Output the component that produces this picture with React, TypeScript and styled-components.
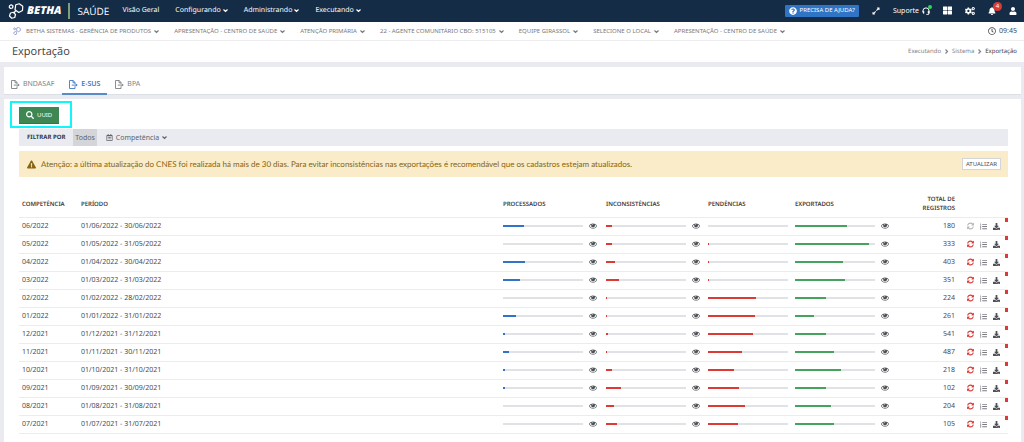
import React from "react";
import styled, { createGlobalStyle } from "styled-components";
import {
  FaBell,
  FaCogs,
  FaDownload,
  FaExclamationTriangle,
  FaExpandAlt,
  FaListOl,
  FaQuestionCircle,
  FaRegCalendarAlt,
  FaRegClock,
  FaSearch,
  FaThLarge,
  FaUser,
} from "react-icons/fa";

const GlobalStyle = createGlobalStyle`
  *, *::before, *::after { box-sizing: border-box; }
  html { background: #e9ebf0; }
  body {
    margin: 0;
    font-family: "Noto Sans", "Open Sans", sans-serif;
    font-size: 7px;
    line-height: 11px;
    color: #4a4d52;
    text-rendering: geometricPrecision;
  }
  button { font: inherit; color: inherit; background: none; border: 0; padding: 0; margin: 0; cursor: pointer; }
  a { color: inherit; text-decoration: none; }
  svg { display: block; flex: none; }
`;

/* ---------- drawings ---------- */

const Molecule = ({ size }: { size: number }) => (
  <svg width={size} height={size} viewBox="0 0 32 32" fill="none" stroke="currentColor" strokeWidth="2.4" strokeLinejoin="round">
    <path d="M15.500 3.500 22.500 1.500 29.500 6.500 29 15 21.500 19 14 13.500Z" />
    <path d="M3 5.500 6.500 3.500 10 6 9 10 5 11 2.500 8.500Z" />
    <path d="M5 20 10.500 18.500 15 23 13.500 29 7.500 30.500 3 26Z" />
    <path d="M15.500 15.500 12 19.500" />
  </svg>
);

const Chevron = ({ size = 5 }: { size?: number }) => (
  <svg width={size} height={size} viewBox="0 0 10 10" fill="none" stroke="currentColor" strokeWidth="2.4">
    <path d="M1 3l4 4 4-4" />
  </svg>
);

const ChevronRight = () => (
  <svg width="5" height="5" viewBox="0 0 10 10" fill="none" stroke="currentColor" strokeWidth="2.400">
    <path d="M3 1l4 4-4 4" />
  </svg>
);

const ExportIcon = () => (
  <svg width="9" height="9" viewBox="0 0 18 18" fill="none" stroke="currentColor" strokeWidth="1.800">
    <path d="M12 12.500V17H1V1h7.500L12 5v3" />
    <path d="M8 1v4.500h4" />
    <path d="M5.500 10.200H14" />
    <path d="M13.500 7.200 17.500 10.200l-4 3z" fill="currentColor" stroke="none" />
  </svg>
);

const Headset = () => (
  <svg width="8" height="8" viewBox="0 0 18 18" fill="none" stroke="currentColor" strokeWidth="2.200">
    <path d="M2 11V9a7 7 0 0 1 14 0v5q0 3-3 3h-3" />
    <path d="M2 9.500h2.500v5H3.500Q2 14 2 12zM16 9.500h-2.500v5h1Q16 14 16 12z" fill="currentColor" strokeWidth="1" />
  </svg>
);

const EyeIcon = () => (
  <svg width="8" height="8" viewBox="0 64 1792 1792" fill="currentColor">
    <path d="M1664 960q-152-236-381-353 61 104 61 225 0 185-131.5 316.5t-316.5 131.5-316.5-131.5-131.5-316.5q0-121 61-225-229 117-381 353 133 205 333.5 326.5t434.5 121.5 434.5-121.5 333.5-326.5zm-720-384q0-20-14-34t-34-14q-125 0-214.5 89.5t-89.5 214.5q0 20 14 34t34 14 34-14 14-34q0-86 61-147t147-61q20 0 34-14t14-34zm848 384q0 34-20 69-140 230-376.5 368.5t-499.5 138.5-499.5-139-376.5-368q-20-35-20-69t20-69q140-229 376.5-368t499.5-139 499.5 139 376.5 368q20 35 20 69z" />
  </svg>
);

const RefreshIcon = () => (
  <svg width="7" height="8" viewBox="0 0 1536 1792" fill="currentColor">
    <path d="M1511 1056q0 5-1 7-64 268-268 434.5t-478 166.5q-146 0-282.5-55t-243.5-157l-129 129q-19 19-45 19t-45-19-19-45v-448q0-26 19-45t45-19h448q26 0 45 19t19 45-19 45l-137 137q71 66 161 102t187 36q134 0 250-65t186-179q11-17 53-117 8-23 30-23h192q13 0 22.5 9.5t9.5 22.5zm25-800v448q0 26-19 45t-45 19h-448q-26 0-45-19t-19-45 19-45l138-138q-148-137-349-137-134 0-250 65t-186 179q-11 17-53 117-8 23-30 23h-199q-13 0-22.5-9.5t-9.5-22.5v-7q65-268 270-434.5t480-166.5q146 0 284 55.5t245 156.5l130-129q19-19 45-19t45 19 19 45z" />
  </svg>
);

/* ---------- top bar ---------- */

const TopBar = styled.header`
  display: flex;
  align-items: center;
  height: 22px;
  padding: 0 7px 1px 8px;
  background: #152c47;
  color: #fff;
`;

const Brand = styled.a`
  display: flex;
  align-items: center;
  gap: 3px;
  font-family: "Open Sans", "Noto Sans", sans-serif;
  font-size: 11px;
  font-weight: 800;
  font-style: italic;
`;

const Product = styled.span`
  margin-left: 6px;
  padding-left: 8px;
  border-left: 2px solid #7f9f76;
  font-family: "Open Sans", "Noto Sans", sans-serif;
  font-size: 10px;
  line-height: 16px;
`;

const MainNav = styled.nav`
  display: flex;
  gap: 16px;
  margin-left: 13px;
`;

const NavItem = styled.a`
  display: flex;
  align-items: center;
  gap: 2px;
`;

const Tools = styled.div`
  display: flex;
  align-items: center;
  gap: 13px;
  margin-left: auto;
`;

const HelpButton = styled.button`
  display: flex;
  align-items: center;
  gap: 3px;
  height: 12px;
  padding: 0 4px;
  border-radius: 1px;
  background: #2f74c5;
  color: #fff;
  font-size: 6px;
`;

const ToolButton = styled.button`
  position: relative;
  display: flex;
  align-items: center;
  gap: 3px;
`;

const OnlineDot = styled.span`
  position: absolute;
  top: 0;
  right: -2px;
  width: 4px;
  height: 4px;
  border-radius: 50%;
  background: #2fd45c;
`;

const Badge = styled.span`
  position: absolute;
  top: -5px;
  right: -6px;
  width: 9px;
  height: 9px;
  border-radius: 50%;
  background: #dc3a35;
  font-size: 6px;
  line-height: 9px;
  text-align: center;
`;

/* ---------- context and title bars ---------- */

const ContextBar = styled.div`
  display: flex;
  align-items: center;
  gap: 15px;
  height: 19px;
  padding: 0 7px 0 13px;
  border-bottom: 1px solid #ededef;
  background: #fff;
  color: #77797d;
`;

const ContextItem = styled.button`
  display: flex;
  align-items: center;
  gap: 3px;
  font-size: 6px;
  white-space: nowrap;
`;

const ContextLogo = styled.span`
  margin-right: 2px;
  color: #6570bd;
`;

const Clock = styled.time`
  display: flex;
  align-items: center;
  gap: 3px;
  margin-left: auto;
  color: #45474b;
`;

const TitleBar = styled.div`
  display: flex;
  align-items: center;
  justify-content: space-between;
  height: 21px;
  padding: 0 7px 0 12px;
  background: #fff;
`;

const Title = styled.h1`
  margin: 0;
  font-family: "Open Sans", "Noto Sans", sans-serif;
  font-size: 11px;
  line-height: 15px;
  font-weight: 400;
  color: #3c3e42;
`;

const Breadcrumb = styled.nav`
  display: flex;
  align-items: center;
  gap: 3px;
  color: #808286;
  font-size: 6px;
`;

const Current = styled.span`
  color: #3c3e42;
`;

/* ---------- content ---------- */

const Page = styled.main`
  display: flex;
  flex-direction: column;
  gap: 4px;
  padding: 5px 3px 0 4px;
`;

const TabCard = styled.nav`
  display: flex;
  align-items: flex-end;
  gap: 1px;
  height: 28px;
  background: #fff;
  border-bottom: 1px solid #dcdfe4;
`;

const Tab = styled.a<{ $active?: boolean }>`
  display: flex;
  align-items: center;
  gap: 3px;
  height: 19px;
  padding: 0 7px;
  margin-bottom: -1px;
  border-bottom: 2px solid ${(p) => (p.$active ? "#5b8ac8" : "transparent")};
  color: ${(p) => (p.$active ? "#3f7ac4" : "#7d7f83")};
  font-weight: ${(p) => (p.$active ? 600 : 400)};
`;

const Card = styled.section`
  min-height: 343px;
  padding: 2px 13px 9px 6px;
  background: #fff;
`;

const Highlight = styled.div`
  width: fit-content;
  padding: 4px 11px 2px 7px;
  border: 2px solid #12f6fb;
`;

const PrimaryButton = styled.button`
  display: flex;
  align-items: center;
  gap: 3px;
  height: 17px;
  padding: 0 7px;
  border-bottom: 1px solid #357546;
  background: #3f8752;
  color: #fff;
  font-size: 6px;
`;

const Body = styled.div`
  padding-left: 9px;
`;

const FilterBar = styled.div`
  display: flex;
  align-items: center;
  height: 17px;
  margin-top: 1px;
  padding-left: 8px;
  background: #e9ebf0;
  color: #606368;
`;

const FilterTitle = styled.strong`
  margin-right: 8px;
  color: #34373b;
  font-size: 6px;
  font-weight: 700;
`;

const FilterOption = styled.button<{ $selected?: boolean }>`
  display: flex;
  align-items: center;
  gap: 3px;
  height: 17px;
  padding: 0 2px;
  margin-right: 7px;
  background: ${(p) => (p.$selected ? "#d4d5d9" : "transparent")};
`;

const Alert = styled.div`
  display: flex;
  align-items: center;
  gap: 5px;
  height: 26px;
  margin-top: 5px;
  padding: 0 7px 0 8px;
  background: #faecc9;
  color: #866410;
`;

const AlertText = styled.span`
  flex: 1;
  font-family: Lato, "Open Sans", sans-serif;
  font-size: 8px;
`;

const AlertButton = styled.button`
  height: 12px;
  padding: 0 3px;
  border: 1px solid #d3d5d9;
  background: #fff;
  color: #4a4d52;
  font-size: 6px;
  line-height: 10px;
`;

/* ---------- table ---------- */

const Table = styled.table`
  width: 100%;
  margin-top: 15px;
  border-collapse: collapse;
  table-layout: fixed;
`;

const Col = styled.col<{ $width?: number }>`
  width: ${(p) => (p.$width ? `${p.$width}px` : "auto")};
`;

const HeadCell = styled.th<{ $right?: boolean }>`
  height: 25px;
  padding: 0 3px;
  border-bottom: 1px solid #ececef;
  color: #3c3e42;
  font-size: 6px;
  font-weight: 600;
  line-height: 9px;
  text-align: ${(p) => (p.$right ? "right" : "left")};
`;

const Cell = styled.td<{ $right?: boolean }>`
  position: relative;
  height: 18px;
  padding: 0 3px;
  border-bottom: 1px solid #ececef;
  text-align: ${(p) => (p.$right ? "right" : "left")};
`;

const Meter = styled.div`
  display: flex;
  align-items: center;
  gap: 6px;
  height: 8px;
`;

const Track = styled.div`
  width: 80px;
  height: 2px;
  background: #e0e2e6;
`;

const Fill = styled.div<{ $color: string }>`
  height: 2px;
  background: ${(p) => p.$color};
`;

const Actions = styled.div`
  display: flex;
  align-items: center;
  gap: 6px;
  height: 8px;
  padding-left: 6px;
`;

const tones = { danger: "#dc3a35", muted: "#b4b6ba", soft: "#7a7c80", plain: "#4d5055" };

const ActionButton = styled.button<{ $tone?: keyof typeof tones }>`
  color: ${(p) => tones[p.$tone ?? "plain"]};
`;

const Marker = styled.span`
  position: absolute;
  top: 0;
  right: 0;
  width: 3px;
  height: 4px;
  background: #dc3a35;
`;

const contexts = [
  "BETHA SISTEMAS - GERÊNCIA DE PRODUTOS",
  "APRESENTAÇÃO - CENTRO DE SAÚDE",
  "ATENÇÃO PRIMÁRIA",
  "22 - AGENTE COMUNITÁRIO CBO: 515105",
  "EQUIPE GIRASSOL",
  "SELECIONE O LOCAL",
  "APRESENTAÇÃO - CENTRO DE SAÚDE",
];

type Row = [string, string, number, number, number, number, number];

const rows: Row[] = [
  ["06/2022", "01/06/2022 - 30/06/2022", 26, 8, 0, 65, 180],
  ["05/2022", "01/05/2022 - 31/05/2022", 0, 7, 1, 93, 333],
  ["04/2022", "01/04/2022 - 30/04/2022", 28, 11, 1, 60, 403],
  ["03/2022", "01/03/2022 - 31/03/2022", 21, 16, 1, 63, 351],
  ["02/2022", "01/02/2022 - 28/02/2022", 0, 1, 60, 39, 224],
  ["01/2022", "01/01/2022 - 31/01/2022", 16, 1, 59, 24, 261],
  ["12/2021", "01/12/2021 - 31/12/2021", 3, 3, 56, 39, 541],
  ["11/2021", "01/11/2021 - 30/11/2021", 8, 1, 42, 49, 487],
  ["10/2021", "01/10/2021 - 31/10/2021", 2, 8, 33, 58, 218],
  ["09/2021", "01/09/2021 - 30/09/2021", 3, 19, 39, 39, 102],
  ["08/2021", "01/08/2021 - 31/08/2021", 0, 10, 46, 45, 204],
  ["07/2021", "01/07/2021 - 31/07/2021", 0, 14, 37, 49, 105],
];

const BLUE = "#2f74c5";
const RED = "#dc3a35";
const GREEN = "#46a35e";

const MeterCell = ({ value, color, label, viewable = true }: { value: number; color: string; label: string; viewable?: boolean }) => (
  <Cell>
    <Meter>
      <Track role="progressbar" aria-label={label} aria-valuenow={value}>
        <Fill $color={color} style={{ width: `${value}%` }} />
      </Track>
      {viewable && (
        <ActionButton aria-label={`Ver ${label}`}>
          <EyeIcon />
        </ActionButton>
      )}
    </Meter>
  </Cell>
);

export default function App() {
  return (
    <>
      <GlobalStyle />
      <TopBar>
        <Brand href="#">
          <Molecule size={16} />
          BETHA
        </Brand>
        <Product>SAÚDE</Product>
        <MainNav>
          <NavItem href="#">Visão Geral</NavItem>
          {["Configurando", "Administrando", "Executando"].map((name) => (
            <NavItem href="#" key={name}>
              {name}
              <Chevron />
            </NavItem>
          ))}
        </MainNav>
        <Tools>
          <HelpButton>
            <FaQuestionCircle size={8} />
            PRECISA DE AJUDA?
          </HelpButton>
          <ToolButton aria-label="Expandir">
            <FaExpandAlt size={8} />
          </ToolButton>
          <ToolButton>
            Suporte
            <Headset />
            <OnlineDot />
          </ToolButton>
          <ToolButton aria-label="Aplicativos">
            <FaThLarge size={9} />
          </ToolButton>
          <ToolButton aria-label="Configurações">
            <FaCogs size={10} />
          </ToolButton>
          <ToolButton aria-label="Notificações">
            <FaBell size={8} />
            <Badge>4</Badge>
          </ToolButton>
          <ToolButton aria-label="Usuário">
            <FaUser size={8} />
          </ToolButton>
        </Tools>
      </TopBar>

      <ContextBar>
        {contexts.map((name, i) => (
          <ContextItem key={i}>
            {i === 0 && (
              <ContextLogo>
                <Molecule size={8} />
              </ContextLogo>
            )}
            {name}
            <Chevron />
          </ContextItem>
        ))}
        <Clock>
          <FaRegClock size={8} />
          09:45
        </Clock>
      </ContextBar>

      <TitleBar>
        <Title>Exportação</Title>
        <Breadcrumb aria-label="Navegação">
          <a href="#">Executando</a>
          <ChevronRight />
          <a href="#">Sistema</a>
          <ChevronRight />
          <Current>Exportação</Current>
        </Breadcrumb>
      </TitleBar>

      <Page>
        <TabCard>
          <Tab href="#">
            <ExportIcon />
            BNDASAF
          </Tab>
          <Tab href="#" $active>
            <ExportIcon />
            E-SUS
          </Tab>
          <Tab href="#">
            <ExportIcon />
            BPA
          </Tab>
        </TabCard>

        <Card>
          <Highlight>
            <PrimaryButton>
              <FaSearch size={8} />
              UUID
            </PrimaryButton>
          </Highlight>
          <Body>
            <FilterBar>
              <FilterTitle>FILTRAR POR</FilterTitle>
              <FilterOption $selected>Todos</FilterOption>
              <FilterOption>
                <FaRegCalendarAlt size={7} />
                Competência
                <Chevron />
              </FilterOption>
            </FilterBar>
            <Alert role="alert">
              <FaExclamationTriangle size={9} />
              <AlertText>
                Atenção: a última atualização do CNES foi realizada há mais de 30 dias. Para evitar inconsistências nas
                exportações é recomendável que os cadastros estejam atualizados.
              </AlertText>
              <AlertButton>ATUALIZAR</AlertButton>
            </Alert>
            <Table>
              <colgroup>
                <Col $width={59} />
                <Col />
                <Col $width={103} />
                <Col $width={102} />
                <Col $width={87} />
                <Col $width={108} />
                <Col $width={58} />
                <Col $width={50} />
              </colgroup>
              <thead>
                <tr>
                  <HeadCell>COMPETÊNCIA</HeadCell>
                  <HeadCell>PERÍODO</HeadCell>
                  <HeadCell>PROCESSADOS</HeadCell>
                  <HeadCell>INCONSISTÊNCIAS</HeadCell>
                  <HeadCell>PENDÊNCIAS</HeadCell>
                  <HeadCell>EXPORTADOS</HeadCell>
                  <HeadCell $right>
                    TOTAL DE
                    <br />
                    REGISTROS
                  </HeadCell>
                  <HeadCell aria-label="Ações" />
                </tr>
              </thead>
              <tbody>
                {rows.map(([month, period, done, wrong, pending, exported, total], i) => (
                  <tr key={month}>
                    <Cell>{month}</Cell>
                    <Cell>{period}</Cell>
                    <MeterCell value={done} color={BLUE} label="processados" />
                    <MeterCell value={wrong} color={RED} label="inconsistências" />
                    <MeterCell value={pending} color={RED} label="pendências" viewable={false} />
                    <MeterCell value={exported} color={GREEN} label="exportados" />
                    <Cell $right>{total}</Cell>
                    <Cell>
                      <Actions>
                        <ActionButton $tone={i === 0 ? "muted" : "danger"} aria-label="Atualizar">
                          <RefreshIcon />
                        </ActionButton>
                        <ActionButton $tone="soft" aria-label="Detalhes">
                          <FaListOl size={7} />
                        </ActionButton>
                        <ActionButton aria-label="Baixar">
                          <FaDownload size={7} />
                        </ActionButton>
                      </Actions>
                      <Marker />
                    </Cell>
                  </tr>
                ))}
              </tbody>
            </Table>
          </Body>
        </Card>
      </Page>
    </>
  );
}
